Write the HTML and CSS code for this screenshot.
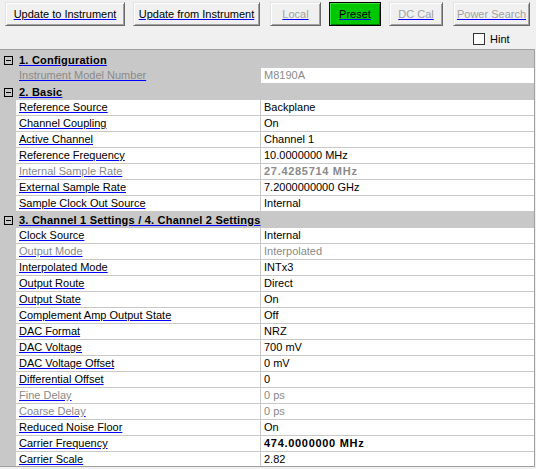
FILE: index.html
```html
<!DOCTYPE html>
<html>
<head>
<meta charset="utf-8">
<link rel="stylesheet" href="styles.css">
</head>
<body>
<div class="toolbar">
  <div class="btn w1"><span class="u">Update to Instrument</span></div>
  <div class="btn w2 g8"><span class="u">Update from Instrument</span></div>
  <div class="btn w3 g10 off"><span class="u">Local</span></div>
  <div class="btn w4 g8 preset"><span class="u">Preset</span></div>
  <div class="btn w5 g8 off"><span class="u">DC Cal</span></div>
  <div class="btn w6 g10 off"><span class="u">Power Search</span></div>
</div>
<div class="hintrow">
  <span class="chk"></span><span class="hint">Hint</span>
</div>
<div class="grid">
  <div class="cat"><span class="tog"></span><span class="catlabel">1. Configuration</span></div>
  <div class="row sel"><span class="m"></span><span class="name dis">Instrument Model Number</span><span class="val dis">M8190A</span></div>

  <div class="cat"><span class="tog"></span><span class="catlabel">2. Basic</span></div>
  <div class="row"><span class="m"></span><span class="name">Reference Source</span><span class="val">Backplane</span></div>
  <div class="row"><span class="m"></span><span class="name">Channel Coupling</span><span class="val">On</span></div>
  <div class="row"><span class="m"></span><span class="name">Active Channel</span><span class="val">Channel 1</span></div>
  <div class="row"><span class="m"></span><span class="name">Reference Frequency</span><span class="val">10.0000000 MHz</span></div>
  <div class="row"><span class="m"></span><span class="name dis">Internal Sample Rate</span><span class="val dis b">27.4285714 MHz</span></div>
  <div class="row"><span class="m"></span><span class="name">External Sample Rate</span><span class="val">7.2000000000 GHz</span></div>
  <div class="row"><span class="m"></span><span class="name">Sample Clock Out Source</span><span class="val">Internal</span></div>

  <div class="cat"><span class="tog"></span><span class="catlabel">3. Channel 1 Settings / 4. Channel 2 Settings</span></div>
  <div class="row"><span class="m"></span><span class="name">Clock Source</span><span class="val">Internal</span></div>
  <div class="row"><span class="m"></span><span class="name dis">Output Mode</span><span class="val dis">Interpolated</span></div>
  <div class="row"><span class="m"></span><span class="name">Interpolated Mode</span><span class="val">INTx3</span></div>
  <div class="row"><span class="m"></span><span class="name">Output Route</span><span class="val">Direct</span></div>
  <div class="row"><span class="m"></span><span class="name">Output State</span><span class="val">On</span></div>
  <div class="row"><span class="m"></span><span class="name">Complement Amp Output State</span><span class="val">Off</span></div>
  <div class="row"><span class="m"></span><span class="name">DAC Format</span><span class="val">NRZ</span></div>
  <div class="row"><span class="m"></span><span class="name">DAC Voltage</span><span class="val">700 mV</span></div>
  <div class="row"><span class="m"></span><span class="name">DAC Voltage Offset</span><span class="val">0 mV</span></div>
  <div class="row"><span class="m"></span><span class="name">Differential Offset</span><span class="val">0</span></div>
  <div class="row"><span class="m"></span><span class="name dis">Fine Delay</span><span class="val dis">0 ps</span></div>
  <div class="row"><span class="m"></span><span class="name dis">Coarse Delay</span><span class="val dis">0 ps</span></div>
  <div class="row"><span class="m"></span><span class="name">Reduced Noise Floor</span><span class="val">On</span></div>
  <div class="row"><span class="m"></span><span class="name">Carrier Frequency</span><span class="val b">474.0000000 MHz</span></div>
  <div class="row"><span class="m"></span><span class="name">Carrier Scale</span><span class="val">2.82</span></div>
</div>
</body>
</html>
```
FILE: styles.css
```css
html, body {
  margin: 0;
  padding: 0;
}
body {
  background: #f0f0f0;
  font-family: "Liberation Sans", Arial, sans-serif;
  font-size: 11px;
  color: #000;
  width: 536px;
  height: 469px;
  overflow: hidden;
}
.u {
  text-decoration: underline;
  text-decoration-color: #0000ff;
}
.toolbar {
  display: flex;
  padding: 2px 0 0 5px;
  height: 24px;
}
.btn {
  box-sizing: border-box;
  height: 24px;
  display: flex;
  align-items: center;
  justify-content: center;
  background: #f0f0f0;
  border: 1px solid;
  border-color: #e3e3e3 #696969 #696969 #e3e3e3;
  box-shadow: inset 1px 1px #ffffff, inset -1px -1px #a0a0a0;
  padding-bottom: 1px;
}
.btn.off { color: #a0a0a0; }
.btn.preset {
  background: #00c800;
  border-color: #000;
  box-shadow: inset 1px 1px #3ce03c, inset -1px -1px #007800;
}
.w1 { width: 120px; }
.w2 { width: 127px; }
.w3 { width: 51px; }
.w4 { width: 52px; }
.w5 { width: 54px; }
.w6 { width: 77px; }
.g8 { margin-left: 8px; }
.g10 { margin-left: 10px; }

.hintrow {
  height: 23px;
  display: flex;
  align-items: flex-start;
  padding-left: 473px;
}
.chk {
  box-sizing: border-box;
  width: 12px;
  height: 12px;
  margin-top: 7px;
  background: #fff;
  border: 1px solid #333;
}
.hint {
  margin-left: 5px;
  margin-top: 7px;
  line-height: 13px;
}

.grid {
  box-sizing: border-box;
  width: 535px;
  height: 418px;
  overflow: hidden;
  background: #c8c8c8;
  border-top: 1px solid #a0a0a0;
  border-right: 1px solid #a0a0a0;
  border-bottom: 1px solid #a0a0a0;
  padding-top: 2px;
}
.cat {
  height: 16px;
  display: flex;
  align-items: center;
  background: #c8c8c8;
}
.tog {
  box-sizing: border-box;
  width: 9px;
  height: 9px;
  margin-left: 4px;
  margin-right: 6px;
  border: 1px solid #000;
  position: relative;
}
.tog::after {
  content: "";
  position: absolute;
  left: 1px;
  top: 3px;
  width: 5px;
  height: 1px;
  background: #000;
}
.catlabel {
  font-weight: bold;
  line-height: 15px;
  letter-spacing: 0.22px;
  text-decoration: underline;
  text-decoration-color: #0000ff;
}
.row {
  display: grid;
  grid-template-columns: 16px 245px 1fr;
  height: 16px;
}
.m { background: #c8c8c8; }
.name, .val {
  box-sizing: border-box;
  height: 16px;
  line-height: 15px;
  border-bottom: 1px solid #c8c8c8;
  background: #fff;
  white-space: nowrap;
  overflow: hidden;
}
.name {
  padding-left: 3px;
  border-right: 1px solid #c8c8c8;
  text-decoration: underline;
  text-decoration-color: #0000ff;
}
.val { padding-left: 3px; }
.row.sel .name { background: #c8c8c8; }
.dis { color: #8a8a8a; }
.b { font-weight: bold; }
.val.b { letter-spacing: 0.7px; }
```
